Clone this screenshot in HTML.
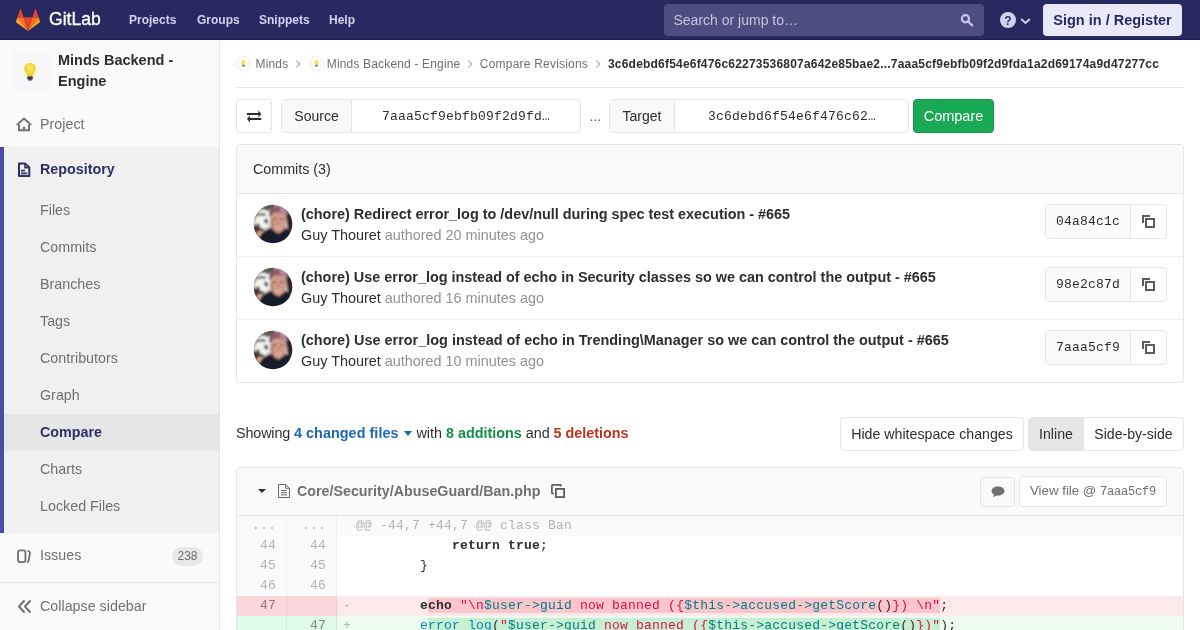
<!DOCTYPE html>
<html lang="en">
<head>
<meta charset="utf-8">
<title>Compare - Minds Backend - Engine</title>
<style>
*{box-sizing:border-box;}
html,body{margin:0;padding:0;}
html{background:#fff;overflow:hidden;}
body{width:1200px;height:630px;overflow:hidden;background:#fff;will-change:transform;color:#2e2e2e;font-family:"Liberation Sans",sans-serif;font-size:14px;line-height:20px;position:relative;}
a{text-decoration:none;color:inherit;}
.mono{font-family:"Liberation Mono",monospace;}

/* NAVBAR */
.navbar{position:absolute;left:0;top:0;width:1200px;height:40px;background:#292961;color:#d1d1f0;border-bottom:1px solid #1f1f52;}
.navbar .logo{position:absolute;left:16px;top:8px;width:24px;height:24px;}
.navbar .wordmark{position:absolute;left:49px;top:6px;font-size:19.2px;line-height:26px;color:#fff;transform:scaleX(0.915);transform-origin:0 0;-webkit-text-stroke:0.35px #fff;}
.navbar .nav-item{position:absolute;top:11px;font-size:12px;line-height:18px;font-weight:bold;color:#d1d1f0;}
.search{position:absolute;left:664px;top:4px;width:320px;height:32px;border-radius:4px;background:#4d4d81;}
.search span{position:absolute;left:9.5px;top:6px;font-size:14px;line-height:20px;color:#c4c4dc;}
.search svg{position:absolute;left:296px;top:9px;}
.help{position:absolute;left:1000px;top:12px;}
.signin{position:absolute;left:1043px;top:4px;width:139px;height:32px;border-radius:4px;background:#e9e9f8;color:#292961;font-weight:bold;font-size:14.5px;line-height:32px;text-align:center;}

/* SIDEBAR */
.sidebar{position:absolute;left:0;top:40px;width:220px;height:590px;background:#fafafa;border-right:1px solid #e5e5e5;}
.ctx{position:absolute;left:0;top:0;width:219px;}
.ctx .av{position:absolute;left:10px;top:10px;width:40px;height:40px;border-radius:3px;background:#f7f7f9;}
.ctx .title{position:absolute;left:58px;top:10px;font-weight:bold;font-size:14.5px;line-height:21px;color:#2e2e2e;width:150px;}
.sb-item{position:absolute;left:0;width:219px;height:45px;color:#707070;font-size:14.3px;}
.sb-item .ic{position:absolute;left:16px;top:14px;}
.sb-item .ic.lo{top:15px;}
.sb-item .lbl{position:absolute;left:40px;top:12px;line-height:20px;}
.sb-active{position:absolute;left:0;top:107px;width:219px;height:386px;background:#f0f0f0;box-shadow:inset 4px 0 0 #4b4ba3;}
.sub{position:absolute;left:40px;font-size:14.3px;line-height:20px;color:#707070;}
.sub-active{position:absolute;left:4px;top:374px;width:215px;height:37px;background:#e6e6e6;}
.badge{position:absolute;left:172px;top:13.5px;width:31px;height:19px;border-radius:10px;background:#e8e8e8;color:#707070;font-size:12px;line-height:19px;text-align:center;}
.collapse{position:absolute;left:0;top:542px;width:219px;height:48px;border-top:1px solid #e5e5e5;background:#fafafa;color:#707070;font-size:14.3px;}

/* CONTENT */
.content{position:absolute;left:220px;top:40px;width:980px;height:590px;}
.crumbs{position:absolute;left:16px;top:0;width:948px;height:48px;border-bottom:1px solid #e5e5e5;font-size:12px;color:#707070;}
.crumbs span{position:absolute;top:16px;line-height:16px;white-space:nowrap;letter-spacing:0.16px;}
.box{position:absolute;border:1px solid #e5e5e5;border-radius:4px;background:#fff;}
.btn{position:absolute;border:1px solid #e5e5e5;border-radius:4px;background:#fff;font-size:14.2px;color:#2e2e2e;text-align:center;}

/* compare form */
.swap{left:16px;top:59px;width:36px;height:34px;}
.grp{position:absolute;top:59px;height:34px;border:1px solid #e5e5e5;border-radius:4px;background:#fff;overflow:hidden;}
.grp .lab{position:absolute;left:0;top:0;height:32px;background:#f8f8fa;border-right:1px solid #e5e5e5;font-size:14px;line-height:33px;text-align:center;color:#2e2e2e;}
.grp .val{position:absolute;top:1px;height:32px;line-height:32px;font-size:13px;letter-spacing:0.2px;color:#2e2e2e;}
.cmpbtn{position:absolute;left:693px;top:59px;width:81px;height:34px;border-radius:4px;background:#1aaa55;border:1px solid #168f48;color:#fff;font-size:14.5px;line-height:32px;text-align:center;}
/* commits */
.commits{left:16px;top:104px;width:948px;height:239px;}
.commits .hd{position:absolute;left:0;top:0;width:946px;height:49px;background:#fafafa;border-bottom:1px solid #e5e5e5;border-radius:3px 3px 0 0;}
.commits .hd span{position:absolute;left:16px;top:14px;font-size:14.3px;line-height:20px;}
.crow{position:absolute;left:0;width:946px;height:63px;border-bottom:1px solid #f0f0f0;}
.crow:last-child{border-bottom:none;}
.crow .avatar{position:absolute;left:16px;top:10px;width:40px;height:40px;}
.crow .t{position:absolute;left:64px;top:10px;font-size:14.42px;line-height:20px;font-weight:bold;color:#2e2e2e;white-space:nowrap;}
.crow .a{position:absolute;left:64px;top:31px;font-size:14.4px;line-height:20px;color:#2e2e2e;white-space:nowrap;}
.crow .a i{font-style:normal;color:#919191;}
.sha{position:absolute;left:808px;top:10px;width:122px;height:35px;border:1px solid #e5e5e5;border-radius:4px;overflow:hidden;background:#fff;}
.sha .l{position:absolute;left:0;top:0;width:85px;height:33px;padding-top:1px;background:#fafafa;border-right:1px solid #e5e5e5;font-size:13px;letter-spacing:0.2px;line-height:32px;text-align:center;color:#2e2e2e;}
.sha svg{position:absolute;left:94px;top:8px;}
/* stats */
.stats{position:absolute;left:16px;top:383px;font-size:14.35px;line-height:20px;white-space:nowrap;}
.stats b.f{color:#1b69b6;} .stats b.g{color:#168f48;} .stats b.r{color:#c0341d;}
.caret{display:inline-block;width:0;height:0;border-left:4px solid transparent;border-right:4px solid transparent;border-top:5px solid #1b69b6;vertical-align:middle;margin:0 1px 2px 1px;}
/* file */
.file{left:16px;top:427px;width:948px;height:200px;border-radius:4px 4px 0 0;overflow:hidden;}
.file .hd{position:absolute;left:0;top:0;width:946px;height:48px;background:#fafafa;border-bottom:1px solid #e5e5e5;}
.file .name{position:absolute;left:60px;top:13px;font-size:14.28px;line-height:20px;font-weight:bold;color:#707070;white-space:nowrap;}
.dl{position:absolute;left:0;width:946px;height:20px;font-family:"Liberation Mono",monospace;font-size:13px;letter-spacing:0.2px;line-height:20px;white-space:pre;color:#2e2e2e;}
.dl .o,.dl .n{position:absolute;top:0;width:50px;height:20px;text-align:right;padding-right:10px;color:#b3b3b3;border-right:1px solid #f0f0f0;background:#fafafa;}
.dl .o{left:0;} .dl .n{left:50px;}
.dl .c{position:absolute;left:100px;top:0;width:846px;height:20px;padding-left:19px;}
.dl .c .sg{position:absolute;left:6px;top:0;}
.dl.match .o,.dl.match .n,.dl.match .c{background:#fafafa;color:#b3b3b3;}
.dl.del .o,.dl.del .n{background:#f9d7dc;border-right-color:#f5c6cd;color:#8a7a7d;}
.dl.del .c{background:#fbe9eb;}
.dl.add .o,.dl.add .n{background:#ddfbe6;border-right-color:#c7f0d2;color:#7a8a7f;}
.dl.add .c{background:#ecfdf0;}
.idd{background:#fac5cd;} .ida{background:#c7f0d2;}
.sg{color:#b3b3b3;}
.k{font-weight:bold;} .s{color:#d14;} .v{color:#008080;} .fn{color:#0086b3;}
</style>
</head>
<body>

<svg width="0" height="0" style="position:absolute"><defs>
<filter id="bl" x="-10%" y="-10%" width="120%" height="120%"><feGaussianBlur stdDeviation="0.9"/></filter>
<clipPath id="cc"><circle cx="20" cy="20" r="19.300"/></clipPath>
<symbol id="guy" viewBox="0 0 40 40"><g clip-path="url(#cc)"><g filter="url(#bl)">
<rect x="-2" y="-2" width="44" height="44" fill="#d6d1cc"/>
<path d="M-2 -2h24v6l-8 3-10 6-6 6z" fill="#5a5850"/>
<path d="M30 -2h12v30h-6z" fill="#4a3a36"/>
<path d="M33 10h9v16h-7z" fill="#2e2220"/>
<ellipse cx="10" cy="15" rx="7.500" ry="9.500" fill="#f4f4f2"/>
<path d="M3.500 11.500c2-2.500 6-3 9.500-1.200l-.4 1.800c-3-1.300-6-1-8.300.6z" fill="#222"/>
<path d="M11.500 14.500l3.500 1-.5 4.500-3-1.500z" fill="#333"/>
<path d="M4 19l3 1.500-.5 3-3-1z" fill="#444"/>
<path d="M-1 20l7 3 5 2-3 9-9 2z" fill="#4a3226"/>
<ellipse cx="7.500" cy="30" rx="3.600" ry="3.300" fill="#d8a888"/>
<path d="M5 42c0-8 3-14 9-16.500l6-3h10l6 3c3 2 4 8 4 16.500z" fill="#171b29"/>
<path d="M20 23l5.500 7 5.500-7z" fill="#c48c7c"/>
<ellipse cx="25.300" cy="17.500" rx="8.200" ry="10.800" fill="#cf9a8b"/>
<path d="M17.200 15c0 5 1.500 9 4 11.500-1-4-1.500-8-.8-12z" fill="#ad7a6e"/>
<path d="M21.500 23.300c2 1.500 5.500 1.500 7.500 0-2 .5-5.500.5-7.500 0z" fill="#f1e4e0"/><ellipse cx="22" cy="14.800" rx="1.800" ry=".9" fill="#7a5148"/><ellipse cx="28.800" cy="14.800" rx="1.800" ry=".9" fill="#7a5148"/><path d="M24.800 16l-.8 4h2.600z" fill="#b98374"/>
<path d="M16.500 13.500c-.8-7 3-12 9.500-12s10 4.500 9 11.500c-1.500-3.500-4-4.500-9-4.500s-8 1-9.500 5z" fill="#8f5c6b"/><path d="M27 2c4 .5 7 3.500 7.500 8-2-2-4-2.500-7-2.500z" fill="#c193a0"/>
<path d="M16.500 13.500c-.8-5 1-9 3.500-11 -1 3-1.500 6-.8 8z" fill="#74485a"/>
</g></g></symbol></defs></svg>
<div class="navbar">
  <svg class="logo" viewBox="0 0 36 36"><path fill="#e24329" d="M18 34.4l6.6-20.4H11.4z"/><path fill="#fc6d26" d="M18 34.4L11.4 14H2.1z"/><path fill="#fca326" d="M2.1 14L.1 20.200a1.400 1.400 0 0 0 .5 1.500L18 34.400z"/><path fill="#e24329" d="M2.1 14h9.300L7.400 1.700c-.2-.6-1.100-.6-1.300 0z"/><path fill="#fc6d26" d="M18 34.4L24.600 14h9.300z"/><path fill="#fca326" d="M33.900 14l2 6.200a1.400 1.400 0 0 1-.5 1.500L18 34.400z"/><path fill="#e24329" d="M33.900 14h-9.300l4-12.300c.2-.6 1.100-.6 1.300 0z"/></svg>
  <div class="wordmark">GitLab</div>
  <div class="nav-item" style="left:129px">Projects</div>
  <div class="nav-item" style="left:197px">Groups</div>
  <div class="nav-item" style="left:259px">Snippets</div>
  <div class="nav-item" style="left:329px">Help</div>
  <div class="search"><span>Search or jump to…</span>
    <svg width="14" height="14" viewBox="0 0 16 16"><circle cx="6.200" cy="6.600" r="4.100" fill="none" stroke="#c8c8ee" stroke-width="2.500"/><path d="M9.600 10l4.300 4.200" stroke="#c8c8ee" stroke-width="2.600" stroke-linecap="round"/></svg>
  </div>
  <svg class="help" width="32" height="16" viewBox="0 0 32 16"><circle cx="8" cy="8" r="8" fill="#d1d1f0"/><text x="8" y="12.500" text-anchor="middle" font-family="Liberation Sans" font-weight="bold" font-size="12" fill="#292961">?</text><path d="M21.200 7l4.300 4 4.300-4" fill="none" stroke="#d1d1f0" stroke-width="1.900"/></svg>
  <div class="signin">Sign in / Register</div>
</div>

<div class="sidebar">
  <div class="ctx">
    <div class="av"><svg style="position:absolute;left:12px;top:10.500px" width="16" height="22" viewBox="0 0 16 22"><defs><radialGradient id="bg1" cx="50%" cy="40%" r="60%"><stop offset="0" stop-color="#fbe96a"/><stop offset="1" stop-color="#f0c92a"/></radialGradient></defs><ellipse cx="8" cy="9" rx="7.500" ry="8.500" fill="#fdf3b0" opacity=".35"/><path d="M8 2c3.300 0 5.800 2.400 5.800 5.500 0 2.200-1.300 3.500-2.100 5-.4.800-.6 1.700-.7 2.500h-6c-.1-.8-.3-1.700-.7-2.500-.8-1.500-2.100-2.800-2.100-5C2.200 4.400 4.700 2 8 2z" fill="url(#bg1)"/><rect x="5.200" y="15.200" width="5.600" height="3.300" rx="1" fill="#4a3550"/><rect x="6.200" y="18.200" width="3.600" height="1.300" rx=".6" fill="#2e2233"/></svg></div>
    <div class="title">Minds Backend - Engine</div>
  </div>
  <div class="sb-item" style="top:62px"><svg class="ic" width="16" height="16" viewBox="0 0 16 16"><path d="M.9 8.900L8 2.600l7.100 6.300" fill="none" stroke="#707070" stroke-width="1.900" stroke-linejoin="miter"/><path d="M3 8.500V14.200h10V8.500" fill="none" stroke="#707070" stroke-width="1.900"/><rect x="6.900" y="10.800" width="2.200" height="3.400" fill="#707070"/></svg><span class="lbl">Project</span></div>
  <div class="sb-active"></div>
  <div class="sub-active"></div>
  <div class="sb-item" style="top:107px;color:#2f2f68;font-weight:bold"><svg class="ic" width="16" height="16" viewBox="0 0 16 16"><path d="M3 2.600h6.300L13.300 6.400V15H3z" fill="none" stroke="#2f2f68" stroke-width="2" stroke-linejoin="round"/><path d="M9 2.600v4h4.300" fill="none" stroke="#2f2f68" stroke-width="1.600"/><path d="M5 9.700h4M5 12.300h6.200" stroke="#2f2f68" stroke-width="1.700"/></svg><span class="lbl">Repository</span></div>
  <div class="sub" style="top:160px">Files</div>
  <div class="sub" style="top:197px">Commits</div>
  <div class="sub" style="top:234px">Branches</div>
  <div class="sub" style="top:271px">Tags</div>
  <div class="sub" style="top:308px">Contributors</div>
  <div class="sub" style="top:345px">Graph</div>
  <div class="sub" style="top:382px;color:#2f2f68;font-weight:bold">Compare</div>
  <div class="sub" style="top:419px">Charts</div>
  <div class="sub" style="top:456px">Locked Files</div>
  <div class="sb-item" style="top:493px"><svg class="ic lo" width="16" height="16" viewBox="0 0 16 16"><rect x="2" y="2.300" width="7.400" height="11.800" rx="2" fill="none" stroke="#707070" stroke-width="1.800"/><path d="M12.200 3c1.200.3 1.900 1.200 1.700 2.400l-1.200 7c-.1.700-.5 1.200-1.100 1.500" fill="none" stroke="#707070" stroke-width="1.800" stroke-linecap="round"/></svg><span class="lbl">Issues</span><span class="badge">238</span></div>
  <div class="collapse"><svg style="position:absolute;left:16px;top:15px" width="16" height="16" viewBox="0 0 16 16"><path d="M8 3L3 8.500 8 14M14 3L9 8.500 14 14" fill="none" stroke="#707070" stroke-width="2" stroke-linecap="round" stroke-linejoin="round"/></svg><span style="position:absolute;left:40px;top:13px;line-height:20px">Collapse sidebar</span></div>
</div>

<div class="content">
  <div class="crumbs">
    <svg style="position:absolute;left:0px;top:16px" width="15" height="15" viewBox="0 0 15 15"><circle cx="7.500" cy="7.500" r="7" fill="#fbfbfb" stroke="#ececf1" stroke-width="1"/><ellipse cx="7.500" cy="6.300" rx="2.300" ry="2.600" fill="#f3e36a"/><rect x="6.300" y="8.800" width="2.400" height="1.700" rx=".5" fill="#6a6470"/></svg><span style="left:19.500px">Minds</span><svg style="position:absolute;left:59.300px;top:20px" width="6" height="8" viewBox="0 0 6 8"><path d="M1.300 .6L4.900 4 1.300 7.400" fill="none" stroke="#a8a8a8" stroke-width="1.100"/></svg>
    <svg style="position:absolute;left:72.5px;top:16px" width="15" height="15" viewBox="0 0 15 15"><circle cx="7.500" cy="7.500" r="7" fill="#fbfbfb" stroke="#ececf1" stroke-width="1"/><ellipse cx="7.500" cy="6.300" rx="2.300" ry="2.600" fill="#f3e36a"/><rect x="6.300" y="8.800" width="2.400" height="1.700" rx=".5" fill="#6a6470"/></svg><span style="left:90.800px">Minds Backend - Engine</span><svg style="position:absolute;left:230.500px;top:20px" width="6" height="8" viewBox="0 0 6 8"><path d="M1.300 .6L4.900 4 1.300 7.400" fill="none" stroke="#a8a8a8" stroke-width="1.100"/></svg>
    <span style="left:243.800px;letter-spacing:0.21px">Compare Revisions</span><svg style="position:absolute;left:358.500px;top:20px" width="6" height="8" viewBox="0 0 6 8"><path d="M1.300 .6L4.900 4 1.300 7.400" fill="none" stroke="#a8a8a8" stroke-width="1.100"/></svg>
    <span style="left:372px;color:#2e2e2e;font-weight:bold;letter-spacing:0.2px">3c6debd6f54e6f476c62273536807a642e85bae2...7aaa5cf9ebfb09f2d9fda1a2d69174a9d47277cc</span>
  </div>
  <div class="btn swap"><svg style="position:absolute;left:-1px;top:-1px" width="36" height="34" viewBox="0 0 36 34"><path d="M11 14h11.300v-2.600L25.300 15l-3 3.600V16H11z M25.300 19H14v-2.600L11 20l3 3.600V21h11.300z" fill="#2e2e2e"/></svg></div>
  <div class="grp" style="left:61px;width:300px"><div class="lab" style="width:70px">Source</div><div class="val mono" style="left:100px">7aaa5cf9ebfb09f2d9fd…</div></div>
  <div style="position:absolute;left:369.500px;top:66px;font-size:14px;color:#555">...</div>
  <div class="grp" style="left:389px;width:300px"><div class="lab" style="width:65px">Target</div><div class="val mono" style="left:98px">3c6debd6f54e6f476c62…</div></div>
  <div class="cmpbtn">Compare</div>

  <div class="box commits">
    <div class="hd"><span>Commits (3)</span></div>
    <div class="crow" style="top:49px"><svg class="avatar" viewBox="0 0 40 40"><use href="#guy"/></svg><div class="t">(chore) Redirect error_log to /dev/null during spec test execution - #665</div><div class="a">Guy Thouret <i>authored 20 minutes ago</i></div><div class="sha"><div class="l mono">04a84c1c</div><svg width="16" height="16" viewBox="0 0 16 16"><path d="M2 2h8v2h-6v6h-2z" fill="#5c5c5c"/><rect x="6" y="6" width="8" height="8" fill="none" stroke="#5c5c5c" stroke-width="2"/></svg></div></div>
    <div class="crow" style="top:112px"><svg class="avatar" viewBox="0 0 40 40"><use href="#guy"/></svg><div class="t">(chore) Use error_log instead of echo in Security classes so we can control the output - #665</div><div class="a">Guy Thouret <i>authored 16 minutes ago</i></div><div class="sha"><div class="l mono">98e2c87d</div><svg width="16" height="16" viewBox="0 0 16 16"><path d="M2 2h8v2h-6v6h-2z" fill="#5c5c5c"/><rect x="6" y="6" width="8" height="8" fill="none" stroke="#5c5c5c" stroke-width="2"/></svg></div></div>
    <div class="crow" style="top:175px"><svg class="avatar" viewBox="0 0 40 40"><use href="#guy"/></svg><div class="t" style="letter-spacing:0.02px">(chore) Use error_log instead of echo in Trending\Manager so we can control the output - #665</div><div class="a">Guy Thouret <i>authored 10 minutes ago</i></div><div class="sha"><div class="l mono">7aaa5cf9</div><svg width="16" height="16" viewBox="0 0 16 16"><path d="M2 2h8v2h-6v6h-2z" fill="#5c5c5c"/><rect x="6" y="6" width="8" height="8" fill="none" stroke="#5c5c5c" stroke-width="2"/></svg></div></div>
  </div>

  <div class="stats"><span style="letter-spacing:-0.13px">Showing </span><b class="f" style="letter-spacing:0.06px">4 changed files</b> <span class="caret"></span> with <b class="g">8 additions</b> and <b class="r">5 deletions</b></div>
  <div class="btn" style="left:620px;top:377px;width:184px;height:34px;line-height:33px">Hide whitespace changes</div>
  <div class="btn" style="left:808px;top:377px;width:156px;height:34px;overflow:hidden"><div style="position:absolute;left:0;top:0;width:55px;height:32px;line-height:33px;background:#e6e6e6;border-right:1px solid #e5e5e5">Inline</div><div style="position:absolute;left:55px;top:0;width:99px;height:32px;line-height:33px;font-size:14.100px">Side-by-side</div></div>

  <div class="box file">
    <div class="hd">
      <div style="position:absolute;left:21px;top:21px;width:0;height:0;border-left:4px solid transparent;border-right:4px solid transparent;border-top:4.500px solid #2e2e2e"></div>
      <svg style="position:absolute;left:41px;top:16px" width="12" height="14" viewBox="0 0 12 14"><path d="M.5.500h7.200l3.800 3.800v9.200H.5z" fill="none" stroke="#666" stroke-width="1"/><path d="M7.700.500v3.800h3.800" fill="none" stroke="#666" stroke-width="1"/><path d="M3 6.500h6M3 8.700h6M3 10.900h6" stroke="#666" stroke-width="1"/></svg>
      <div class="name">Core/Security/AbuseGuard/Ban.php</div>
      <svg style="position:absolute;left:314px;top:16px" width="14" height="14" viewBox="0 0 14 14"><path d="M.9 9.700V1.700a.8.800 0 0 1 .8-.8h8v1.600" fill="none" stroke="#5c5c5c" stroke-width="1.700"/><path d="M.9 9.500h2" stroke="#5c5c5c" stroke-width="1.700"/><rect x="4.900" y="4.900" width="8.200" height="8.200" fill="none" stroke="#5c5c5c" stroke-width="1.800"/></svg>
      <div class="btn" style="left:743px;top:9px;width:35px;height:30px;background:#fafafa"><svg style="position:absolute;left:9.500px;top:7px" width="14" height="14" viewBox="0 0 14 14"><path d="M7 1.500c3.600 0 6.500 2 6.500 4.600s-2.900 4.600-6.500 4.600c-.5 0-1 0-1.500-.1-1 .9-2.300 1.400-3.700 1.500.6-.6 1.100-1.400 1.200-2.300C1.500 9 .5 7.600.5 6.100.5 3.500 3.400 1.500 7 1.500z" fill="#707070"/></svg></div>
      <div class="btn" style="left:782px;top:8px;width:148px;height:31px;line-height:27px;font-size:13.300px;color:#707070;white-space:pre">View file @ <span class="mono" style="font-size:12px;letter-spacing:-0.2px">7aaa5cf9</span></div>
    </div>
    <div class="dl match" style="top:48px"><div class="o">...</div><div class="n">...</div><div class="c">@@ -44,7 +44,7 @@ class Ban</div></div>
    <div class="dl" style="top:68px"><div class="o">44</div><div class="n">44</div><div class="c">            <span class="k">return</span> <span class="k">true</span>;</div></div>
    <div class="dl" style="top:88px"><div class="o">45</div><div class="n">45</div><div class="c">        }</div></div>
    <div class="dl" style="top:108px"><div class="o">46</div><div class="n">46</div><div class="c"> </div></div>
    <div class="dl del" style="top:128px"><div class="o">47</div><div class="n"> </div><div class="c"><span class="sg">-</span>        <span class="k">e</span><span class="idd"><span class="k">cho</span> <span class="s">"\n<span class="v">$user</span><span class="v">-&gt;guid</span> now banned (<span class="s">{</span><span class="v">$this</span><span class="v">-&gt;accused-&gt;getScore</span><span style="color:#2e2e2e">()</span><span class="s">}</span>) \n"</span></span>;</div></div>
    <div class="dl add" style="top:148px"><div class="o"> </div><div class="n">47</div><div class="c"><span class="sg">+</span>        <span class="fn">e</span><span class="ida"><span class="fn">rror_log</span>(<span class="s">"<span class="v">$user</span><span class="v">-&gt;guid</span> now banned (<span class="s">{</span><span class="v">$this</span><span class="v">-&gt;accused-&gt;getScore</span><span style="color:#2e2e2e">()</span><span class="s">}</span>)"</span></span>);</div></div>
  </div>
</div>

</body>
</html>
